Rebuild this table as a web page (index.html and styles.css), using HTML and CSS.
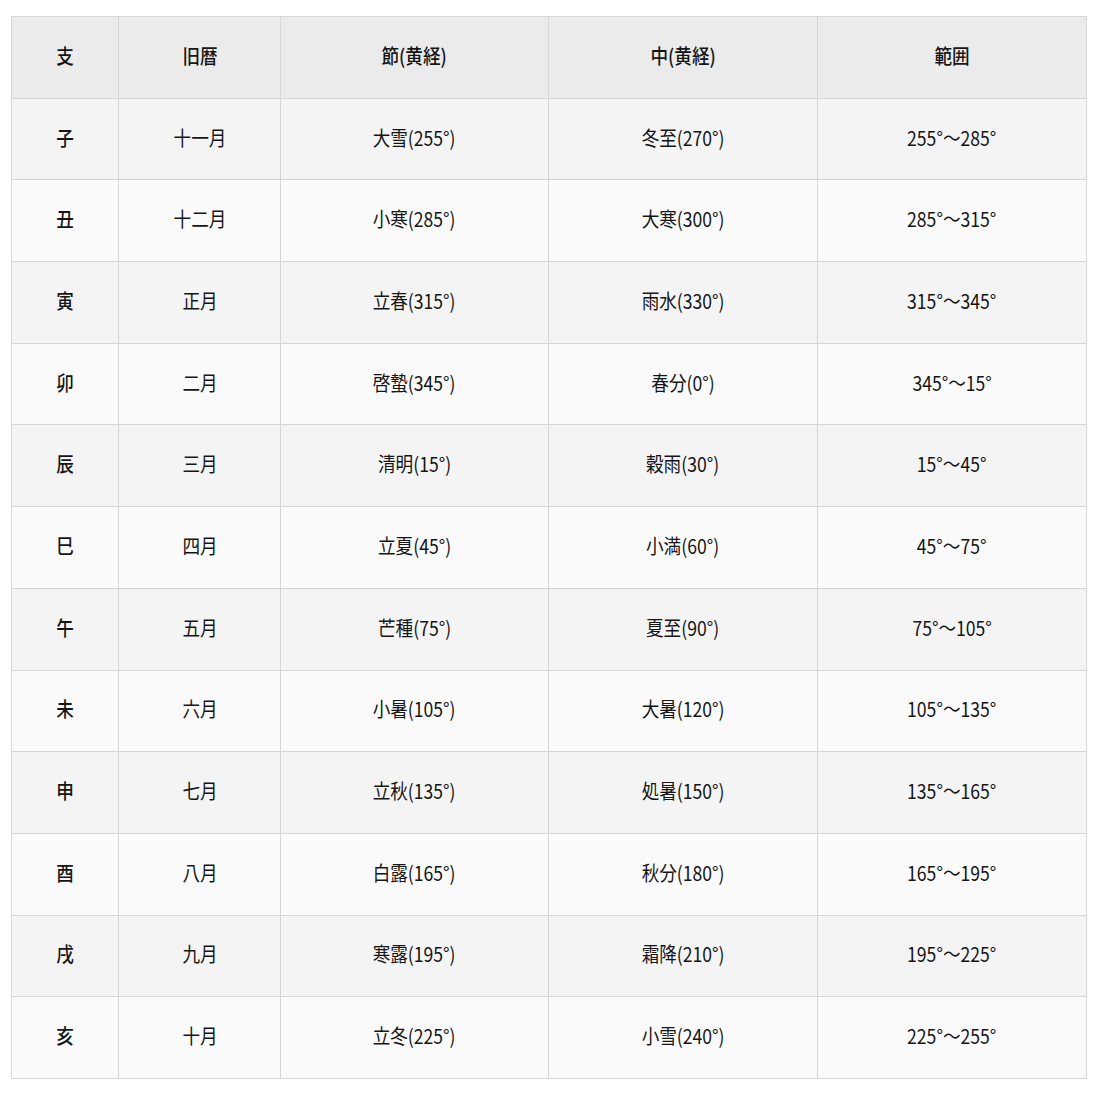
FILE: index.html
```html
<!DOCTYPE html>
<html lang="ja">
<head>
<meta charset="utf-8">
<link rel="stylesheet" href="styles.css">
</head>
<body>
<div class="wrap">
<table class="tbl">
<colgroup>
<col class="c1"><col class="c2"><col class="c3"><col class="c4"><col class="c5">
</colgroup>
<thead>
<tr><th><span class="t">支</span></th><th><span class="t">旧暦</span></th><th><span class="t">節(黄経)</span></th><th><span class="t">中(黄経)</span></th><th><span class="t">範囲</span></th></tr>
</thead>
<tbody>
<tr><td><span class="t">子</span></td><td><span class="t">十一月</span></td><td><span class="t">大雪(255°)</span></td><td><span class="t">冬至(270°)</span></td><td><span class="t">255°〜285°</span></td></tr>
<tr><td><span class="t">丑</span></td><td><span class="t">十二月</span></td><td><span class="t">小寒(285°)</span></td><td><span class="t">大寒(300°)</span></td><td><span class="t">285°〜315°</span></td></tr>
<tr><td><span class="t">寅</span></td><td><span class="t">正月</span></td><td><span class="t">立春(315°)</span></td><td><span class="t">雨水(330°)</span></td><td><span class="t">315°〜345°</span></td></tr>
<tr><td><span class="t">卯</span></td><td><span class="t">二月</span></td><td><span class="t">啓蟄(345°)</span></td><td><span class="t">春分(0°)</span></td><td><span class="t">345°〜15°</span></td></tr>
<tr><td><span class="t">辰</span></td><td><span class="t">三月</span></td><td><span class="t">清明(15°)</span></td><td><span class="t">穀雨(30°)</span></td><td><span class="t">15°〜45°</span></td></tr>
<tr><td><span class="t">巳</span></td><td><span class="t">四月</span></td><td><span class="t">立夏(45°)</span></td><td><span class="t">小満(60°)</span></td><td><span class="t">45°〜75°</span></td></tr>
<tr><td><span class="t">午</span></td><td><span class="t">五月</span></td><td><span class="t">芒種(75°)</span></td><td><span class="t">夏至(90°)</span></td><td><span class="t">75°〜105°</span></td></tr>
<tr><td><span class="t">未</span></td><td><span class="t">六月</span></td><td><span class="t">小暑(105°)</span></td><td><span class="t">大暑(120°)</span></td><td><span class="t">105°〜135°</span></td></tr>
<tr><td><span class="t">申</span></td><td><span class="t">七月</span></td><td><span class="t">立秋(135°)</span></td><td><span class="t">処暑(150°)</span></td><td><span class="t">135°〜165°</span></td></tr>
<tr><td><span class="t">酉</span></td><td><span class="t">八月</span></td><td><span class="t">白露(165°)</span></td><td><span class="t">秋分(180°)</span></td><td><span class="t">165°〜195°</span></td></tr>
<tr><td><span class="t">戌</span></td><td><span class="t">九月</span></td><td><span class="t">寒露(195°)</span></td><td><span class="t">霜降(210°)</span></td><td><span class="t">195°〜225°</span></td></tr>
<tr><td><span class="t">亥</span></td><td><span class="t">十月</span></td><td><span class="t">立冬(225°)</span></td><td><span class="t">小雪(240°)</span></td><td><span class="t">225°〜255°</span></td></tr>
</tbody>
</table>
</div>
</body>
</html>
```
FILE: styles.css
```css
html, body {
  margin: 0;
  padding: 0;
  background: #ffffff;
}
.wrap {
  padding: 16px 10px 0 11px;
}
.tbl {
  width: 1075px;
  border-collapse: collapse;
  table-layout: fixed;
  font-family: "Noto Sans CJK JP", sans-serif;
  font-size: 20px;
  color: #151515;
}
.c1 { width: 107px; }
.c2 { width: 162px; }
.c3 { width: 268px; }
.c4 { width: 269px; }
.c5 { width: 269px; }
.tbl th, .tbl td {
  border: 1px solid #d6d6d6;
  text-align: center;
  vertical-align: middle;
  height: 81.7px;
  padding: 0 0 3px 0;
  box-sizing: border-box;
  line-height: 1;
}
.t {
  display: inline-block;
  transform: scaleX(0.88);
  white-space: nowrap;
}
.tbl th {
  background: #ebebeb;
  font-weight: 500;
}
.tbl td {
  font-weight: 400;
}
.tbl tbody tr:nth-child(odd) td { background: #f4f4f4; }
.tbl tbody tr:nth-child(even) td { background: #fafafa; }
.tbl td:first-child { font-weight: 500; }
```
